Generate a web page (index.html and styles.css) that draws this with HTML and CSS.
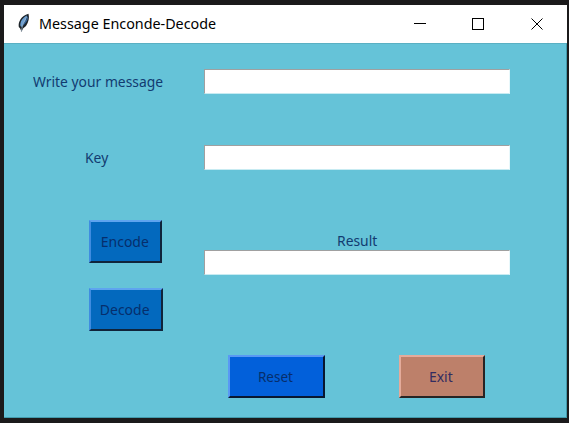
FILE: index.html
```html
<!DOCTYPE html>
<html lang="en">
<head>
<meta charset="utf-8">
<title>Message Enconde-Decode</title>
<link rel="stylesheet" href="styles.css">
</head>
<body>
<main class="window">
  <header class="titlebar">
    <svg class="feather" viewBox="0 0 14 20" width="14" height="20">
      <path d="M4.500 19 3.200 15.500 1.800 14C1 9 4 3 11.500 .8Q13 7 9 13L6 15.500Z" fill="#1c2329"/>
      <path d="M3.500 13C2.500 9 6 4 10 2.500Q10 7 4.500 14Z" fill="#6b9fd2"/>
      <path d="M6 11Q10 7 10.500 3Q12 6 8.500 10L5 14Z" fill="#34659c"/>
      <path d="M4.300 18.500Q4.500 12 9.500 4" fill="none" stroke="#a5b9ca" stroke-width=".7"/>
    </svg>
    <h1 class="title"><span class="text">Message Enconde-Decode</span></h1>
    <svg class="controls" viewBox="0 0 129 12" width="129" height="12" fill="none" stroke="#000" shape-rendering="crispEdges">
      <path d="M0 5.500H12M58.500 .5H69.500V11.500H58.500Z"/>
      <path d="M117.500 .5 128.500 11.500M128.500 .5 117.500 11.500" shape-rendering="auto"/>
    </svg>
  </header>
  <section class="client">
    <div class="row message-row"><label class="label" for="message"><span class="text">Write your message</span></label><input class="entry" id="message"></div>
    <div class="row key-row"><label class="label key" for="key"><span class="text">Key</span></label><input class="entry" id="key"></div>
    <div class="row work-row">
      <div class="actions">
        <button class="button encode"><span class="text">Encode</span></button>
        <button class="button decode"><span class="text">Decode</span></button>
      </div>
      <div class="result"><label class="result-label" for="result"><span class="text">Result</span></label><input class="entry" id="result"></div>
    </div>
    <div class="row footer">
      <button class="button reset"><span class="text">Reset</span></button>
      <button class="button exit"><span class="text">Exit</span></button>
    </div>
  </section>
</main>
</body>
</html>
```
FILE: styles.css
```css
* { box-sizing: border-box; }
body {
  margin: 0;
  padding: 5px 2px 5px 4px;
  height: 423px;
  background: #1b1a1b;
  font-family: "Noto Sans", "Open Sans", sans-serif;
  overflow: hidden;
}
.window { width: 563px; height: 413px; background: #65c3d8; }
.titlebar {
  display: flex;
  align-items: flex-start;
  height: 38px;
  background: #fff;
}
.feather { margin: 8px 0 0 13px; }
.title {
  width: 180px;
  margin: 8px 0 0 8px;
  font-size: 15px;
  font-weight: 400;
  line-height: 21px;
  color: #000;
  white-space: nowrap;
}
.title .text { transform: scaleX(.955); }
.controls { margin: 13px 24px 0 auto; }
.client {
  height: 375px;
  padding-top: 26px;
  border: solid #429aac;
  border-width: 1px 1px 1px 0;
  border-top-color: #5ab0c3;
}
.row { display: flex; }
.text { display: inline-block; transform: scaleX(.925); transform-origin: left; }
.label, .result-label {
  font-size: 15px;
  line-height: 20px;
  color: #123b71;
  white-space: nowrap;
}
.label { width: 200px; padding: 2px 0 0 29px; }
.key { padding-left: 81px; }
.entry {
  display: block;
  width: 306px;
  height: 25px;
  padding: 0 4px;
  border: 1px solid;
  border-color: #a0a0a0 #e8f8fb #c7ebf2 #a0a0a0;
  border-radius: 0;
  background: #fff;
  font: 14px "Noto Sans", sans-serif;
  outline: 0;
}
.message-row { height: 76px; margin-top: -1px; }
.key-row { height: 75px; }
.work-row { height: 135px; }
.actions { display: flex; flex-direction: column; gap: 25px; width: 200px; padding-left: 85px; }
.result-label { display: block; height: 30px; padding: 10px 0 0 133px; }
.button {
  height: 43px;
  padding: 0;
  border: 2px solid;
  border-radius: 0;
  font: 15px/20px "Noto Sans", sans-serif;
  color: #062e6c;
}
.button .text { transform: translate(-1px, -1px) scaleX(.93); transform-origin: center; }
.reset .text { transform: translate(-1px, -1px) scaleX(.9); }
.encode, .decode { background: #0369be; border-color: #5ea4ef #10243b #10243b #3f8ce0; }
.encode { width: 73px; }
.decode { width: 74px; }
.footer { gap: 74px; padding-left: 224px; }
.reset { width: 97px; background: #0260da; border-color: #5999f4 #08172f #08172f #5999f4; }
.exit { width: 86px; background: #bd806a; border-color: #e4ab9b #272424 #272424 #e4ab9b; color: #322c60; }
```
